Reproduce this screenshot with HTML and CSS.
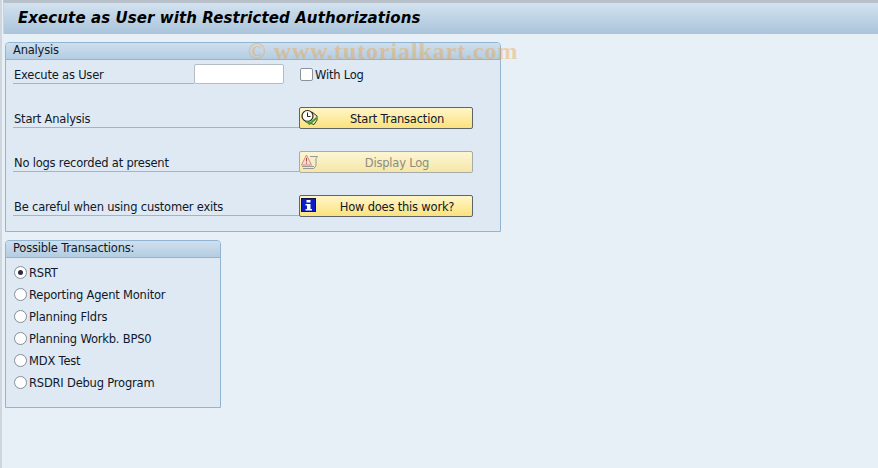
FILE: index.html
```html
<!DOCTYPE html>
<html lang="en">
<head>
<meta charset="utf-8">
<title>Execute as User with Restricted Authorizations</title>
<link rel="stylesheet" href="styles.css">
</head>
<body>
<div class="page">
  <header class="titlebar"><h1>Execute as User with Restricted Authorizations</h1></header>
  <main class="content">
    <section class="panel analysis">
      <h2 class="panel-head">Analysis</h2>
      <div class="rows">
        <div class="row first">
          <span class="label">Execute as User</span>
          <span class="input"></span>
          <span class="check"><span class="box"></span>With Log</span>
        </div>
        <div class="row">
          <span class="label">Start Analysis</span>
          <button class="btn"><svg class="icon" viewBox="0 0 18 18" width="18" height="18"><path d="M4 12.500L13 15.500Q17.500 11 16 7L11 3" fill="#f7efb0" stroke="#333" stroke-width="1"/><circle cx="6.500" cy="7" r="5.500" fill="#fdfdf5" stroke="#222" stroke-width="1.200"/><path d="M6.500 3.500v4h3" fill="none" stroke="#222" stroke-width="1"/><path d="M5.500 12l3 3 7-6" fill="none" stroke="#4a9a28" stroke-width="2"/></svg><span class="btn-text">Start Transaction</span></button>
        </div>
        <div class="row">
          <span class="label">No logs recorded at present</span>
          <button class="btn disabled"><svg class="icon" viewBox="0 0 18 18" width="18" height="18"><path d="M9 3.500h7.500l-1.500 2v6.500q0 2-2 3" fill="#f4eed0" stroke="#9a9a90"/><path d="M5.500 2L10.500 12H0.500Z" fill="#f8dcd4" stroke="#c89088"/><path d="M5.500 5v3.500M5.500 9.500v1.200" stroke="#c04030"/><path d="M1 13.500h12M2 15.500h11" stroke="#9a9a90"/></svg><span class="btn-text">Display Log</span></button>
        </div>
        <div class="row">
          <span class="label">Be careful when using customer exits</span>
          <button class="btn"><svg class="icon" viewBox="0 0 18 18" width="18" height="18"><rect x="0.500" y="1.500" width="14" height="13" fill="#0a1ec8" stroke="#101050"/><path d="M5.500 3h4v2.500h-4zM4.500 7h5v5h1.500v1.500H4.500V12h1.500V8.500H4.500z" fill="#fff"/></svg><span class="btn-text">How does this work?</span></button>
        </div>
      </div>
    </section>
    <section class="panel transactions">
      <h2 class="panel-head">Possible Transactions:</h2>
      <ul class="radios">
        <li><span class="radio on"></span>RSRT</li>
        <li><span class="radio"></span>Reporting Agent Monitor</li>
        <li><span class="radio"></span>Planning Fldrs</li>
        <li><span class="radio"></span>Planning Workb. BPS0</li>
        <li><span class="radio"></span>MDX Test</li>
        <li><span class="radio"></span>RSDRI Debug Program</li>
      </ul>
    </section>
  </main>
  <div class="watermark">© www.tutorialkart.com</div>
</div>
</body>
</html>
```
FILE: styles.css
```css
* { box-sizing: border-box; }
html, body { margin: 0; height: 100%; }
body {
  background: #e8f0f7;
  color: #10182a;
  font-family: "DejaVu Sans", sans-serif;
  font-size: 11.5px;
  letter-spacing: -0.2px;
  overflow: hidden;
}
.page { position: relative; height: 468px; border-left: 2px solid #d0d6dd; }
.titlebar {
  height: 34px;
  margin-left: 1px;
  padding-top: 5px;
  border-top: 3px solid #b8c0ca;
  background: linear-gradient(#d3e2ef, #aac4db);
  border-left: 1px solid #c8d4e0;
}
.titlebar h1 {
  margin: 0;
  padding-left: 14px;
  font-size: 15px;
  line-height: 20px;
  letter-spacing: 0.09px;
  font-weight: bold;
  font-style: italic;
  color: #000;
}
.content { padding: 8px 0 0 3px; display: flex; flex-direction: column; align-items: flex-start; gap: 8px; }
.panel {
  border: 1px solid #90b4d2;
  border-radius: 4px 4px 0 0;
  background: #dee9f3;
}
.analysis { width: 496px; height: 190px; }
.transactions { width: 216px; height: 168px; }
.panel-head {
  margin: 0;
  height: 17px;
  padding-left: 7px;
  font-size: 11.5px;
  line-height: 15px;
  font-weight: normal;
  background: linear-gradient(#cfdfed, #b3cde2);
  border-bottom: 1px solid #90b4d2;
  border-radius: 3px 3px 0 0;
}
.rows { display: flex; flex-direction: column; }
.row { display: flex; height: 44px; align-items: flex-end; padding-left: 7px; }
.row.first { height: 24px; }
.label {
  width: 286px;
  height: 22px;
  padding: 4px 0 0 1px;
  line-height: 18px;
  border-bottom: 1px solid #a9b3bb;
  flex: none;
}
.first .label { width: 181px; }
.input {
  width: 90px;
  height: 20px;
  background: #fff;
  border: 1px solid #b4bcc4;
  border-radius: 2px;
  flex: none;
}
.check { display: flex; align-items: center; height: 20px; margin-left: 16px; padding-top: 2px; }
.box {
  width: 13px;
  height: 13px;
  margin: -2px 2px 0 0;
  background: #fff;
  border: 1px solid #8a929a;
  border-radius: 2px;
}
.btn {
  display: flex;
  align-items: center;
  width: 174px;
  height: 22px;
  margin-bottom: -1px;
  padding: 0 0 0 1px;
  font: inherit;
  letter-spacing: inherit;
  color: inherit;
  background: linear-gradient(#fff6c8, #fbe27e);
  border: 1px solid #5e6468;
  border-radius: 2px;
}
.icon { flex: none; }
.btn-text { flex: 1; text-align: center; padding: 2px 0 0 3px; }
.disabled {
  color: #8c8c80;
  border-color: #a8aca8;
  background: linear-gradient(#fdf6d4, #f5e6a8);
}
.radios { list-style: none; margin: 0; padding: 3px 0 0 8px; }
.radios li { display: flex; align-items: center; height: 22px; padding-top: 2px; }
.radio {
  width: 13px;
  height: 13px;
  margin: -2px 2px 0 0;
  border: 1px solid #858d95;
  border-radius: 50%;
  background: #fff;
  display: flex;
  align-items: center;
  justify-content: center;
}
.radio.on::after {
  content: "";
  width: 5px;
  height: 5px;
  border-radius: 50%;
  background: #2a3040;
}
.watermark {
  position: absolute;
  left: 246px;
  top: 38px;
  font-family: "Liberation Serif", serif;
  font-size: 24px;
  font-weight: bold;
  letter-spacing: 0.9px;
  color: #f0a040;
  opacity: 0.4;
  white-space: nowrap;
}
```
